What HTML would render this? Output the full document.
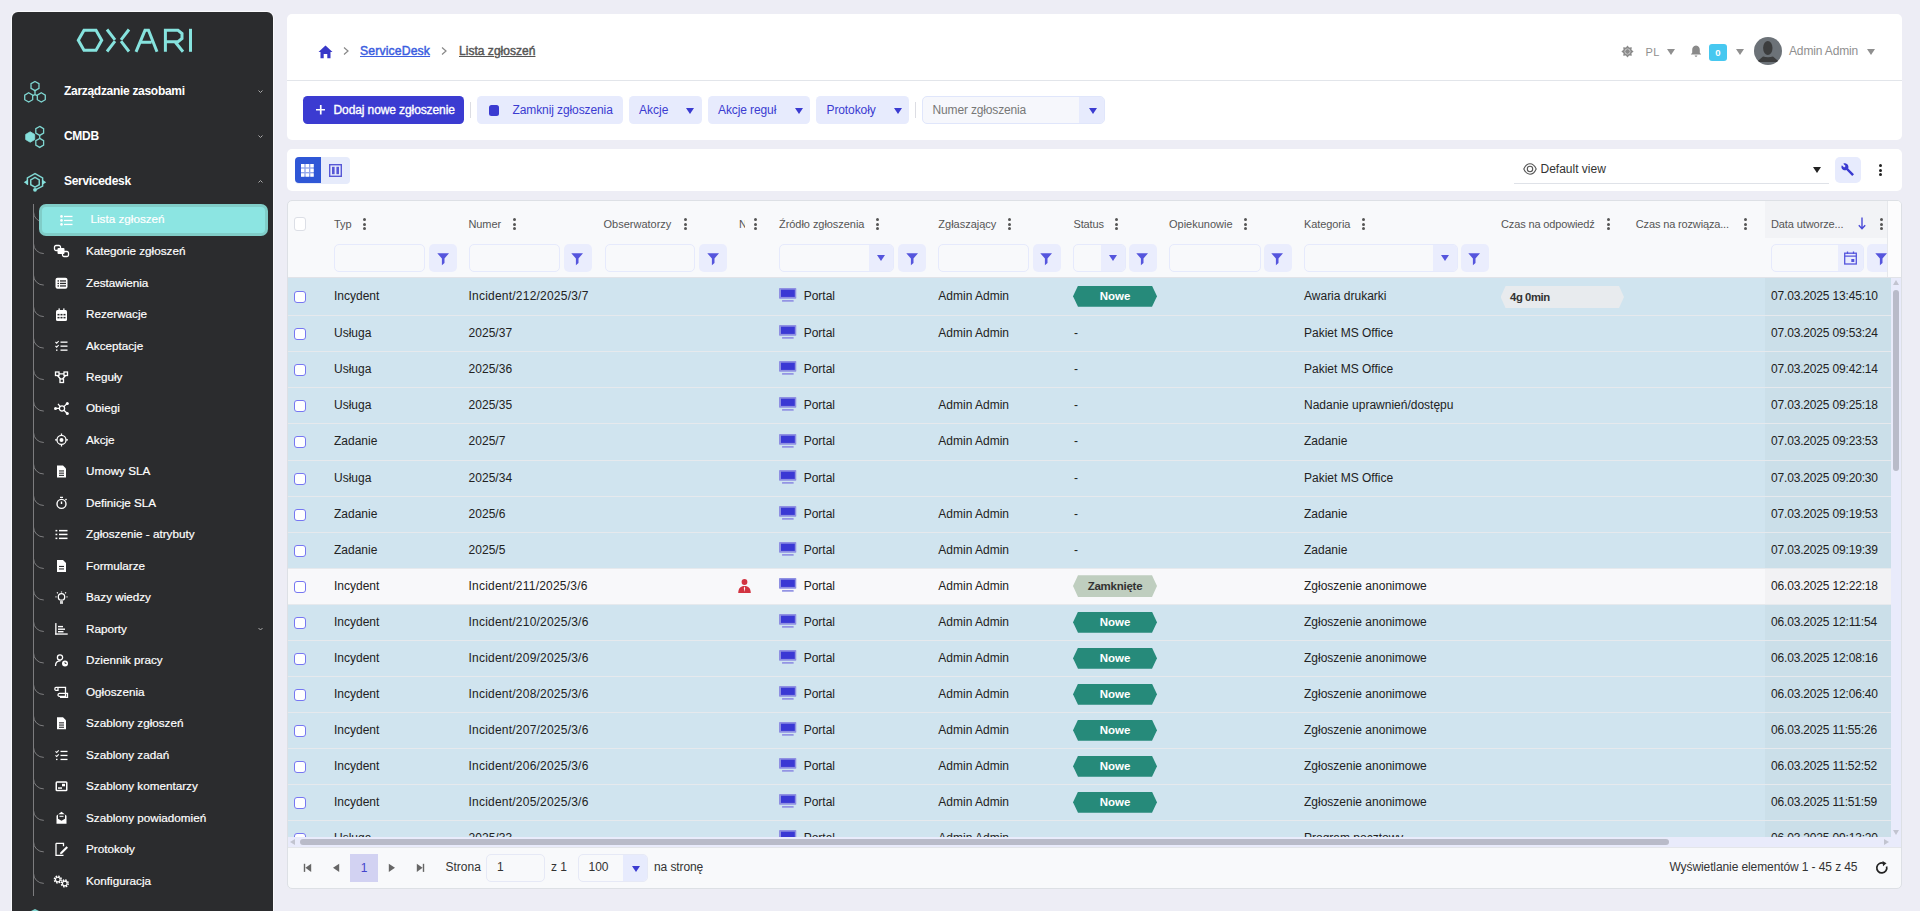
<!DOCTYPE html><html><head><meta charset="utf-8"><style>
*{box-sizing:border-box;margin:0;padding:0}
html,body{width:1920px;height:911px;overflow:hidden}
body{background:#ededf5;font-family:"Liberation Sans",sans-serif;position:relative;color:#222}
.a{position:absolute;white-space:nowrap}
#sb{position:absolute;left:12px;top:12px;width:261px;height:930px;background:#2b2c2e;border-radius:6px;box-shadow:0 0 0 1px #f9f9fc}
.mi{position:absolute;left:64px;color:#fff;font-size:12px;font-weight:700;letter-spacing:-0.3px;white-space:nowrap;line-height:14px}
.si{position:absolute;left:86px;color:#fff;font-size:11.7px;white-space:nowrap;line-height:14px;-webkit-text-stroke:0.2px #fff;letter-spacing:0px}
.card{position:absolute;left:287px;width:1615px;background:#fff;border-radius:5px}
.btn{position:absolute;top:96px;height:28px;border-radius:4.5px;background:#e7ebfd;color:#3b3bd1;font-size:12px;line-height:28px;white-space:nowrap}
.tri{position:absolute;width:0;height:0;border-left:4px solid transparent;border-right:4px solid transparent;border-top:6px solid #3b3bd1}
.hl{position:absolute;top:216.8px;font-size:11px;color:#555;white-space:nowrap;line-height:14px}
.dots{position:absolute;top:218px;width:3px;height:12px}
.dots i{display:block;width:3px;height:3px;background:#555;border-radius:50%;margin-bottom:1.5px}
.fin{position:absolute;top:244px;height:28px;border:1px solid #e6eafc;border-radius:5px;background:#f8f9fb;overflow:hidden}
.fdd{position:absolute;top:0;right:0;width:24px;height:26px;background:#eaedfd}
.fbt{position:absolute;top:244px;width:28px;height:28px;border-radius:5px;background:#eaedfd}
.row{position:absolute;left:0;width:1603px;border-bottom:1px solid #e6e9ed;background:#d0e4ef}
.c{position:absolute;font-size:12px;line-height:14px;white-space:nowrap;color:#222}
.cb{position:absolute;left:6px;width:12px;height:12px;border:1.5px solid #7777f2;border-radius:3px;background:#fff}
.badge{position:absolute;left:785px;width:84px;height:21px;font-size:11.5px;font-weight:700;line-height:21px;text-align:center;color:#fff;clip-path:polygon(5px 0,calc(100% - 5px) 0,100% 50%,calc(100% - 5px) 100%,5px 100%,0 50%)}
</style></head><body>
<div id="sb"></div>
<svg class="a" style="left:70px;top:20px" width="130" height="40" viewBox="0 0 130 40" fill="none" stroke="#86e3de" stroke-width="3">
<path d="M8.3 20.3 L14 10.3 L26 10.3 L31.7 20.3 L26 30.3 L14 30.3 Z" stroke-linejoin="miter"/>
<path d="M37 9.5 L45 19.8 M45 21.2 L37 31.5"/>
<path d="M59 9.5 L51 19.8 M51 21.2 L59 31.5"/>
<path d="M66 31.8 L75 10.3 L78.5 10.3 L87 31.8 M71 22.2 H81.5"/>
<path d="M95.4 8.8 V31.8 M95.4 10.3 H108 L112 13.5 V18.5 L108 21.7 H95.4 M105 21.7 L113 31.8"/>
<path d="M120.5 8.8 V31.8"/>
</svg>
<svg class="a" style="left:0;top:0" width="60" height="200" viewBox="0 0 60 200" fill="none" stroke="#7fd6d1" stroke-width="1.3"><path d="M35.00 81.45 L38.98 83.75 L38.98 88.35 L35.00 90.65 L31.02 88.35 L31.02 83.75 Z"/><path d="M28.70 92.80 L32.68 95.10 L32.68 99.70 L28.70 102.00 L24.72 99.70 L24.72 95.10 Z"/><path d="M41.30 92.80 L45.28 95.10 L45.28 99.70 L41.30 102.00 L37.32 99.70 L37.32 95.10 Z"/><path d="M35 90.6 V94.6 L32.7 95.6 M35 94.6 L37.3 95.6"/><path d="M30.20 131.80 L34.70 134.40 L34.70 139.60 L30.20 142.20 L25.70 139.60 L25.70 134.40 Z" fill="#86e0dc" stroke="#86e0dc" stroke-width="0.8"/><path d="M39.70 126.40 L43.60 128.65 L43.60 133.15 L39.70 135.40 L35.80 133.15 L35.80 128.65 Z"/><path d="M39.70 138.40 L43.60 140.65 L43.60 145.15 L39.70 147.40 L35.80 145.15 L35.80 140.65 Z"/><path d="M39.7 135.4 V138.4"/><g transform="translate(35 182.3)"><path d="M-7.6 2.4 V-4.4 L0 -8.7 L7.6 -4.4 V3.8 L0.8 7.4" stroke-width="1.5"/><path d="M0.00 -4.90 L4.24 -2.45 L4.24 2.45 L0.00 4.90 L-4.24 2.45 L-4.24 -2.45 Z" stroke-width="1.5"/><path d="M-11.2 0 L-7 -2.8 L-7 2.6 Z M11.2 0 L7 -2.8 L7 2.6 Z" fill="#86e0dc" stroke="none"/><circle cx="0" cy="7.5" r="1.9" fill="#86e0dc" stroke="none"/></g></svg>
<div class="mi" style="top:84px">Zarządzanie zasobami</div>
<div class="mi" style="top:129px">CMDB</div>
<div class="mi" style="top:174px">Servicedesk</div>
<svg class="a" style="left:255px;top:85px" width="12" height="100" viewBox="0 0 12 100" fill="none" stroke="#aaa" stroke-width="1">
<path d="M3.5 5.5 l2 2 l2 -2"/><path d="M3.5 50.5 l2 2 l2 -2"/><path d="M3.5 97.5 l2 -2 l2 2"/>
</svg>
<svg class="a" style="left:0;top:0" width="280" height="911" viewBox="0 0 280 911" fill="none" stroke="#7c7c7e" stroke-width="1"><path d="M33.5 204 V896"/><path d="M33.5 212.0 A10.3 10 0 0 0 43.8 222.0"/><path d="M33.5 243.6 A10.3 10 0 0 0 43.8 253.6"/><path d="M33.5 275.1 A10.3 10 0 0 0 43.8 285.1"/><path d="M33.5 306.6 A10.3 10 0 0 0 43.8 316.6"/><path d="M33.5 338.1 A10.3 10 0 0 0 43.8 348.1"/><path d="M33.5 369.6 A10.3 10 0 0 0 43.8 379.6"/><path d="M33.5 401.1 A10.3 10 0 0 0 43.8 411.1"/><path d="M33.5 432.5 A10.3 10 0 0 0 43.8 442.5"/><path d="M33.5 464.0 A10.3 10 0 0 0 43.8 474.0"/><path d="M33.5 495.5 A10.3 10 0 0 0 43.8 505.5"/><path d="M33.5 527.0 A10.3 10 0 0 0 43.8 537.0"/><path d="M33.5 558.5 A10.3 10 0 0 0 43.8 568.5"/><path d="M33.5 590.0 A10.3 10 0 0 0 43.8 600.0"/><path d="M33.5 621.5 A10.3 10 0 0 0 43.8 631.5"/><path d="M33.5 653.0 A10.3 10 0 0 0 43.8 663.0"/><path d="M33.5 684.5 A10.3 10 0 0 0 43.8 694.5"/><path d="M33.5 715.9 A10.3 10 0 0 0 43.8 725.9"/><path d="M33.5 747.4 A10.3 10 0 0 0 43.8 757.4"/><path d="M33.5 778.9 A10.3 10 0 0 0 43.8 788.9"/><path d="M33.5 810.4 A10.3 10 0 0 0 43.8 820.4"/><path d="M33.5 841.9 A10.3 10 0 0 0 43.8 851.9"/><path d="M33.5 873.4 A10.3 10 0 0 0 43.8 883.4"/></svg>
<div class="a" style="left:39px;top:204px;width:229px;height:32px;background:#8ce5e2;border:3px solid #80cdc8;border-radius:7px"></div>
<div class="si" style="left:90.5px;top:212.4px">Lista zgłoszeń</div>
<div class="si" style="left:86px;top:244.0px">Kategorie zgłoszeń</div>
<div class="si" style="left:86px;top:275.5px">Zestawienia</div>
<div class="si" style="left:86px;top:307.0px">Rezerwacje</div>
<div class="si" style="left:86px;top:338.5px">Akceptacje</div>
<div class="si" style="left:86px;top:370.0px">Reguły</div>
<div class="si" style="left:86px;top:401.4px">Obiegi</div>
<div class="si" style="left:86px;top:432.9px">Akcje</div>
<div class="si" style="left:86px;top:464.4px">Umowy SLA</div>
<div class="si" style="left:86px;top:495.9px">Definicje SLA</div>
<div class="si" style="left:86px;top:527.4px">Zgłoszenie - atrybuty</div>
<div class="si" style="left:86px;top:558.9px">Formularze</div>
<div class="si" style="left:86px;top:590.4px">Bazy wiedzy</div>
<div class="si" style="left:86px;top:621.9px">Raporty</div>
<div class="si" style="left:86px;top:653.4px">Dziennik pracy</div>
<div class="si" style="left:86px;top:684.9px">Ogłoszenia</div>
<div class="si" style="left:86px;top:716.3px">Szablony zgłoszeń</div>
<div class="si" style="left:86px;top:747.8px">Szablony zadań</div>
<div class="si" style="left:86px;top:779.3px">Szablony komentarzy</div>
<div class="si" style="left:86px;top:810.8px">Szablony powiadomień</div>
<div class="si" style="left:86px;top:842.3px">Protokoły</div>
<div class="si" style="left:86px;top:873.8px">Konfiguracja</div>
<svg class="a" style="left:255px;top:625px" width="12" height="10" fill="none" stroke="#aaa" stroke-width="1"><path d="M3.5 3 l2 2 l2 -2"/></svg>
<svg class="a" style="left:0;top:0" width="280" height="911" viewBox="0 0 280 911" fill="#fff" stroke="none"><g transform="translate(66.5 220.4)" fill="#fff"><circle cx="-5" cy="-4" r="1.3"/><circle cx="-5" cy="0" r="1.3"/><circle cx="-5" cy="4" r="1.3"/><rect x="-2.5" y="-4.6" width="8.5" height="1.3"/><rect x="-2.5" y="-0.6" width="8.5" height="1.3"/><rect x="-2.5" y="3.4" width="8.5" height="1.3"/></g><g transform="translate(61.5 251.0)"><rect x="-7" y="-5.5" width="6" height="5" rx="1.5" fill="none" stroke="#fff" stroke-width="1.3"/><rect x="1" y="0.5" width="6" height="5" rx="1.5" fill="none" stroke="#fff" stroke-width="1.3"/><rect x="-4" y="-3" width="7" height="6" rx="1"/></g><g transform="translate(61.5 282.5)"><g transform="translate(0 0.8)"><rect x="-6" y="-5.5" width="12" height="11" rx="2"/><rect x="-4" y="-3" width="1.5" height="1.3" fill="#2b2c2e"/><rect x="-1.5" y="-3" width="6" height="1.3" fill="#2b2c2e"/><rect x="-4" y="-0.5" width="1.5" height="1.3" fill="#2b2c2e"/><rect x="-1.5" y="-0.5" width="6" height="1.3" fill="#2b2c2e"/><rect x="-4" y="2" width="1.5" height="1.3" fill="#2b2c2e"/><rect x="-1.5" y="2" width="6" height="1.3" fill="#2b2c2e"/></g></g><g transform="translate(61.5 314.0)"><g transform="translate(0 0.9)"><rect x="-5.5" y="-5" width="11" height="11" rx="1.5"/><rect x="-3" y="-6.5" width="1.3" height="3"/><rect x="1.7" y="-6.5" width="1.3" height="3"/><g fill="#2b2c2e"><rect x="-4" y="-1" width="2" height="1.5"/><rect x="-1" y="-1" width="2" height="1.5"/><rect x="2" y="-1" width="2" height="1.5"/><rect x="-4" y="2" width="2" height="1.5"/><rect x="-1" y="2" width="2" height="1.5"/><rect x="2" y="2" width="2" height="1.5"/></g></g></g><g transform="translate(61.5 345.5)"><path d="M-6 -3.5 l1.2 1.2 l2 -2.2" stroke="#fff" stroke-width="1.1" fill="none"/><path d="M-6 0.5 l1.2 1.2 l2 -2.2" stroke="#fff" stroke-width="1.1" fill="none"/><rect x="-1" y="-4" width="7" height="1.3"/><rect x="-1" y="0" width="7" height="1.3"/><rect x="-5.5" y="4" width="1.5" height="1.3"/><rect x="-1" y="4" width="7" height="1.3"/></g><g transform="translate(61.5 377.0)"><g fill="none" stroke="#fff" stroke-width="1.3"><rect x="-6" y="-5" width="3.5" height="3.5"/><rect x="2.5" y="-5" width="3.5" height="3.5"/><rect x="-1.5" y="2" width="3.5" height="3.5"/><path d="M-2.5 -3.2 H2.5 M-4 -1.5 L-1 2 M4 -1.5 L1 2"/></g></g><g transform="translate(61.5 408.4)"><g fill="none" stroke="#fff" stroke-width="1.3"><circle cx="0.5" cy="0" r="2.6"/><path d="M-2.1 0 H-5.5 M2.4 -1.8 L5.5 -4.8 M2.4 1.8 L5.5 4.8 M-1.3 -1.8 L-3.5 -4.5"/></g><circle cx="-6" cy="0" r="1.5"/><circle cx="5.8" cy="-5" r="1.5"/><circle cx="5.8" cy="5" r="1.5"/></g><g transform="translate(61.5 439.9)"><g fill="none" stroke="#fff" stroke-width="1.3"><circle cx="0" cy="0" r="4.5"/><path d="M0 -6.5 V-4.5 M0 4.5 V6.5 M-6.5 0 H-4.5 M4.5 0 H6.5"/></g><circle cx="0" cy="0" r="2"/></g><g transform="translate(61.5 471.4)"><path d="M-4.5 -6 H1.5 L4.5 -3 V6 H-4.5 Z"/><g fill="#2b2c2e"><rect x="-2.5" y="-1" width="5" height="1.1"/><rect x="-2.5" y="1.2" width="5" height="1.1"/><rect x="-2.5" y="3.4" width="5" height="1.1"/></g></g><g transform="translate(61.5 723.3)"><path d="M-4.5 -6 H1.5 L4.5 -3 V6 H-4.5 Z"/><g fill="#2b2c2e"><rect x="-2.5" y="-1" width="5" height="1.1"/><rect x="-2.5" y="1.2" width="5" height="1.1"/><rect x="-2.5" y="3.4" width="5" height="1.1"/></g></g><g transform="translate(61.5 502.9)"><g fill="none" stroke="#fff" stroke-width="1.4"><circle cx="0" cy="1" r="4.5"/><path d="M0 1 V-1.5 M-1.5 -5.5 H1.5 M4 -3 l1 -1"/></g></g><g transform="translate(61.5 534.4)"><rect x="-6" y="-4.5" width="1.8" height="1.5"/><rect x="-6" y="-0.7" width="1.8" height="1.5"/><rect x="-6" y="3.2" width="1.8" height="1.5"/><rect x="-2.5" y="-4.5" width="8.5" height="1.5"/><rect x="-2.5" y="-0.7" width="8.5" height="1.5"/><rect x="-2.5" y="3.2" width="8.5" height="1.5"/></g><g transform="translate(61.5 565.9)"><path d="M-4.5 -6 H1.5 L4.5 -3 V6 H-4.5 Z"/><g fill="#2b2c2e"><rect x="-2.5" y="0" width="5" height="1.1"/><rect x="-2.5" y="2.5" width="5" height="1.1"/></g></g><g transform="translate(61.5 597.4)"><g fill="none" stroke="#fff" stroke-width="1.3"><circle cx="0" cy="-0.5" r="3.2"/><path d="M-1.5 4.5 H1.5 M0 -6 V-5 M-5 -0.5 H-6 M5 -0.5 H6 M-3.7 -4.2 l-0.8 -0.8 M3.7 -4.2 l0.8 -0.8"/></g><rect x="-1.5" y="5" width="3" height="1.3"/></g><g transform="translate(61.5 628.9)"><rect x="-6.3" y="-5.8" width="1.3" height="11.5"/><rect x="-6.3" y="4.5" width="12.5" height="1.3"/><rect x="-3.5" y="-3" width="5" height="1.4"/><rect x="-3.5" y="-0.4" width="7" height="1.4"/><rect x="-3.5" y="2.1" width="5.5" height="1.4"/></g><g transform="translate(61.5 660.4)"><g fill="none" stroke="#fff" stroke-width="1.3"><circle cx="-1.5" cy="-3" r="2.6"/><path d="M-6 5.5 C-6 1 -3.5 0.5 -1 0.5"/></g><circle cx="3.5" cy="3" r="3"/><path d="M3.5 1.5 V3 H5" stroke="#2b2c2e" stroke-width="0.9" fill="none"/></g><g transform="translate(61.5 691.9)"><g fill="none" stroke="#fff" stroke-width="1.3"><path d="M-5.5 -4.5 H4 V4.5 H-2 C-4 4.5 -4 1.5 -2 1.5 H6 V5.5 H-1.5 M-5.5 -4.5 C-7 -4.5 -7 -1.5 -5.5 -1.5 H-3.5 V-4.5"/></g></g><g transform="translate(61.5 754.8)"><path d="M-6 -3.5 l1.2 1.2 l2 -2.2" stroke="#fff" stroke-width="1.1" fill="none"/><path d="M-6 0.5 l1.2 1.2 l2 -2.2" stroke="#fff" stroke-width="1.1" fill="none"/><rect x="-1" y="-4" width="7" height="1.3"/><rect x="-1" y="0" width="7" height="1.3"/><rect x="-5.5" y="4" width="1.5" height="1.3"/><rect x="-1" y="4" width="7" height="1.3"/></g><g transform="translate(61.5 786.3)"><rect x="-6" y="-5" width="12" height="10" rx="1.5"/><rect x="-4.5" y="-3.5" width="9" height="7" fill="#2b2c2e"/><rect x="0.5" y="-2.5" width="3" height="2.5"/><rect x="-3.5" y="1" width="4" height="1.5"/></g><g transform="translate(61.5 817.8)"><path d="M-5 -2 L0 -6 L5 -2 V6 H-5 Z"/><path d="M-3.5 -3.5 H3.5 V1 L0 3 L-3.5 1 Z" fill="#2b2c2e"/><rect x="-2" y="-2" width="4" height="1" fill="#fff"/></g><g transform="translate(61.5 849.3)"><g fill="none" stroke="#fff" stroke-width="1.3"><path d="M-5.5 -6 H2 V-3 M-5.5 -6 V6 H2"/></g><path d="M-1 3 L5 -3 L6.5 -1.5 L0.5 4.5 L-1.5 5 Z"/></g><g transform="translate(61.5 880.8)"><g fill="none" stroke="#fff"><circle cx="-3.7" cy="-1.3" r="2.3" stroke-width="1.1"/><circle cx="-3.7" cy="-1.3" r="3.4" stroke-width="1.5" stroke-dasharray="1.6 1.07"/><circle cx="3.3" cy="2.6" r="2.3" stroke-width="1.1"/><circle cx="3.3" cy="2.6" r="3.4" stroke-width="1.5" stroke-dasharray="1.6 1.07"/></g></g></svg>
<div class="a" style="left:31px;top:909px;width:8px;height:8px;background:#7fd6d1;clip-path:polygon(50% 0,100% 25%,100% 100%,0 100%,0 25%)"></div>
<div class="card" style="top:14px;height:125.5px"></div>
<div class="a" style="left:287px;top:80px;width:1615px;height:1px;background:#e2e5ea"></div>
<svg class="a" style="left:318px;top:45px" width="15" height="14" viewBox="0 0 15 14"><path d="M7.5 0.5 L14.5 7 H12.5 V13.2 H9.3 V9 H5.7 V13.2 H2.5 V7 H0.5 Z" fill="#3838c8"/></svg>
<svg class="a" style="left:342px;top:46px" width="8" height="10" fill="none" stroke="#888" stroke-width="1.2"><path d="M2 1.5 L6 5 L2 8.5"/></svg>
<div class="a" style="left:360px;top:44px;font-size:12px;line-height:14px;color:#3b5de0;text-decoration:underline;-webkit-text-stroke:0.45px #3b5de0;letter-spacing:0.15px;font-size:12.2px">ServiceDesk</div>
<svg class="a" style="left:440px;top:46px" width="8" height="10" fill="none" stroke="#888" stroke-width="1.2"><path d="M2 1.5 L6 5 L2 8.5"/></svg>
<div class="a" style="left:459px;top:44px;font-size:12px;line-height:14px;color:#555;text-decoration:underline;-webkit-text-stroke:0.45px #555;letter-spacing:0.03px">Lista zgłoszeń</div>
<svg class="a" style="left:1621.4px;top:45px" width="13" height="13" viewBox="-6.5 -6.5 13 13"><polygon points="0.00,-6.10 1.65,-3.97 4.31,-4.31 3.97,-1.65 6.10,0.00 3.97,1.65 4.31,4.31 1.65,3.97 0.00,6.10 -1.65,3.97 -4.31,4.31 -3.97,1.65 -6.10,0.00 -3.97,-1.65 -4.31,-4.31 -1.65,-3.97" fill="#8a8a8a"/><circle r="3.3" fill="#8a8a8a"/><circle r="2.6" fill="none" stroke="#e8e8e8" stroke-width="0.7"/><circle r="1.9" fill="#8a8a8a"/></svg>
<div class="a" style="left:1645.5px;top:45px;font-size:11px;line-height:14px;color:#8f8f8f;letter-spacing:0.4px">PL</div>
<div class="tri" style="left:1667px;top:49px;border-top-color:#8f8f8f;border-left-width:4px;border-right-width:4px;border-top-width:6px"></div>
<svg class="a" style="left:1690px;top:45px" width="12" height="12" viewBox="0 0 12 12"><path d="M6 0.5 C3.3 0.5 2.2 2.8 2.2 5 V7.8 L0.8 9.6 H11.2 L9.8 7.8 V5 C9.8 2.8 8.7 0.5 6 0.5 Z" fill="#8a8a8a"/><path d="M4.6 10.4 H7.4 C7.2 11.3 6.7 11.8 6 11.8 C5.3 11.8 4.8 11.3 4.6 10.4Z" fill="#8a8a8a"/></svg>
<div class="a" style="left:1709px;top:44px;width:18px;height:17px;background:#47c8f0;border-radius:3px;color:#fff;font-size:9.5px;font-weight:700;text-align:center;line-height:17px">0</div>
<div class="tri" style="left:1736px;top:49px;border-top-color:#8f8f8f"></div>
<svg class="a" style="left:1754px;top:37px" width="28" height="28" viewBox="0 0 28 28"><defs><clipPath id="av"><circle cx="14" cy="14" r="14"/></clipPath></defs><circle cx="14" cy="14" r="14" fill="#6c7278"/><g clip-path="url(#av)" fill="#3c3d3e"><ellipse cx="13.8" cy="11" rx="4.7" ry="6.9"/><path d="M2.6 25 L9 19.6 Q14 21 19 19.6 L25.4 25 Z"/></g></svg>
<div class="a" style="left:1789px;top:44px;font-size:12px;line-height:14px;color:#8f8f8f;letter-spacing:-0.15px">Admin Admin</div>
<div class="tri" style="left:1867px;top:49px;border-top-color:#8f8f8f"></div>
<div class="btn" style="left:303px;width:161px;background:#3b3bd1;color:#fff"><svg class="a" style="left:12.6px;top:9.4px" width="9.5" height="9.5"><path d="M4.75 0 V9.5 M0 4.75 H9.5" stroke="#fff" stroke-width="1.7"/></svg><span class="a" style="left:30.5px;-webkit-text-stroke:0.35px #fff;letter-spacing:-0.1px">Dodaj nowe zgłoszenie</span></div>
<div class="a" style="left:470px;top:102px;width:1px;height:16px;background:#dcdde3"></div>
<div class="btn" style="left:477px;width:146px"><div class="a" style="left:11.5px;top:9px;width:10.5px;height:10.5px;background:#3b3bd1;border-radius:2.5px"></div><span class="a" style="left:35.5px;letter-spacing:-0.1px">Zamknij zgłoszenia</span></div>
<div class="btn" style="left:629px;width:73px"><span class="a" style="left:10px">Akcje</span><div class="tri" style="left:57px;top:11.5px"></div></div>
<div class="btn" style="left:708px;width:101.5px"><span class="a" style="left:10px;letter-spacing:-0.1px">Akcje reguł</span><div class="tri" style="left:86.5px;top:11.5px"></div></div>
<div class="btn" style="left:816px;width:93px"><span class="a" style="left:10.5px;letter-spacing:-0.1px">Protokoły</span><div class="tri" style="left:77.5px;top:11.5px"></div></div>
<div class="a" style="left:915px;top:102px;width:1px;height:16px;background:#dcdde3"></div>
<div class="a" style="left:922px;top:96px;width:183px;height:28px;border:1px solid #e0e6fb;border-radius:5px;background:#f6f7fc;overflow:hidden"><span class="a" style="left:9.5px;top:5.5px;font-size:12px;line-height:14px;color:#777;letter-spacing:-0.15px">Numer zgłoszenia</span><div class="a" style="left:156px;top:0;width:26px;height:26px;background:#e7ebfd"></div><div class="tri" style="left:166px;top:10.5px"></div></div>
<div class="card" style="top:149px;height:42px"></div>
<div class="a" style="left:295px;top:157px;width:55px;height:27px;background:#e6ebfb;border-radius:4px"></div>
<div class="a" style="left:295px;top:157px;width:26px;height:26px;background:#2f57d6;border-radius:4px 0 0 4px"></div>
<svg class="a" style="left:301.2px;top:164px" width="12.7" height="12.7" viewBox="0 0 13 13" fill="#fff"><rect x="0" y="0" width="13" height="13" fill="#93a8ec"/><rect x="0" y="0" width="3.4" height="3.4"/><rect x="4.8" y="0" width="3.4" height="3.4"/><rect x="9.6" y="0" width="3.4" height="3.4"/><rect x="0" y="4.8" width="3.4" height="3.4"/><rect x="4.8" y="4.8" width="3.4" height="3.4"/><rect x="9.6" y="4.8" width="3.4" height="3.4"/><rect x="0" y="9.6" width="3.4" height="3.4"/><rect x="4.8" y="9.6" width="3.4" height="3.4"/><rect x="9.6" y="9.6" width="3.4" height="3.4"/></svg>
<svg class="a" style="left:329px;top:163.5px" width="13" height="13" viewBox="0 0 13 13"><rect x="0.7" y="0.7" width="11.6" height="11.6" fill="none" stroke="#5757d6" stroke-width="1.4"/><rect x="3" y="2.8" width="2.6" height="7.4" fill="#5757d6"/><rect x="7.4" y="2.8" width="2.6" height="7.4" fill="#5757d6"/></svg>
<div class="a" style="left:1514px;top:183px;width:315px;height:1px;background:#dfe2e8"></div>
<svg class="a" style="left:1522.5px;top:163px" width="14" height="12" viewBox="0 0 14 12" fill="none" stroke="#555" stroke-width="1.1"><path d="M0.8 6 C2.5 2.2 4.8 0.8 7 0.8 C9.2 0.8 11.5 2.2 13.2 6 C11.5 9.8 9.2 11.2 7 11.2 C4.8 11.2 2.5 9.8 0.8 6 Z"/><circle cx="7" cy="6" r="2.7"/></svg>
<div class="a" style="left:1540.5px;top:162px;font-size:12px;line-height:14px;color:#333">Default view</div>
<div class="tri" style="left:1813px;top:166.5px;border-top-color:#222;border-left-width:4px;border-right-width:4px;border-top-width:6px"></div>
<div class="a" style="left:1835px;top:157px;width:26px;height:26px;background:#e7ebfd;border-radius:5px"></div>
<svg class="a" style="left:1841px;top:163px" width="14" height="14" viewBox="0 0 14 14"><path d="M13 11.2 L7.2 5.4 C7.8 3.6 7.3 1.8 5.9 0.9 C4.8 0.2 3.4 0.2 2.3 0.8 L4.6 3.1 L3.2 4.5 L0.9 2.2 C0.2 3.4 0.3 4.9 1.1 5.9 C2.1 7.2 3.8 7.6 5.4 7.1 L11.2 13 Z" fill="#3a3ad0"/></svg>
<div class="a" style="left:1878.5px;top:164px;width:3px;height:12px"><div style="width:3px;height:3px;background:#222;border-radius:50%;margin-bottom:1.6px"></div><div style="width:3px;height:3px;background:#222;border-radius:50%;margin-bottom:1.6px"></div><div style="width:3px;height:3px;background:#222;border-radius:50%"></div></div>
<div class="a" style="left:287px;top:200px;width:1615px;height:689px;background:#f8f9fb;border:1px solid #dde0e5;border-radius:5px"></div>
<div class="a" style="left:1765px;top:201px;width:122px;height:37px;background:#f2f3f6"></div>
<div class="a" style="left:1887px;top:201px;width:1px;height:77px;background:#e6e8ec"></div>
<div class="a" style="left:1888px;top:201px;width:13px;height:77px;background:#fcfcfd;border-radius:0 4px 0 0"></div>
<div class="a" style="left:294px;top:217px;width:12px;height:13.5px;border:1px solid #dcdfe6;border-radius:3px;background:#fff"></div>
<div class="hl" style="left:334px;letter-spacing:-0.1px">Typ</div>
<div class="dots" style="left:363.3px"><i></i><i></i><i></i></div>
<div class="hl" style="left:468.4px;letter-spacing:-0.05px">Numer</div>
<div class="dots" style="left:513.0px"><i></i><i></i><i></i></div>
<div class="hl" style="left:603.5px;letter-spacing:0px">Obserwatorzy</div>
<div class="dots" style="left:684.1px"><i></i><i></i><i></i></div>
<div class="hl" style="left:739px;width:6px;overflow:hidden">N</div>
<div class="dots" style="left:754.1px"><i></i><i></i><i></i></div>
<div class="hl" style="left:779px;letter-spacing:-0.05px">Źródło zgłoszenia</div>
<div class="dots" style="left:875.9px"><i></i><i></i><i></i></div>
<div class="hl" style="left:938.3px;letter-spacing:0px">Zgłaszający</div>
<div class="dots" style="left:1008.1px"><i></i><i></i><i></i></div>
<div class="hl" style="left:1073.4px;letter-spacing:-0.1px">Status</div>
<div class="dots" style="left:1115.0px"><i></i><i></i><i></i></div>
<div class="hl" style="left:1169px;letter-spacing:0px">Opiekunowie</div>
<div class="dots" style="left:1244.1px"><i></i><i></i><i></i></div>
<div class="hl" style="left:1304.1px;letter-spacing:-0.1px">Kategoria</div>
<div class="dots" style="left:1362.0px"><i></i><i></i><i></i></div>
<div class="hl" style="left:1501px;letter-spacing:-0.14px">Czas na odpowiedź</div>
<div class="dots" style="left:1607.3px"><i></i><i></i><i></i></div>
<div class="hl" style="left:1635.8px;letter-spacing:-0.15px">Czas na rozwiąza...</div>
<div class="dots" style="left:1744.3px"><i></i><i></i><i></i></div>
<div class="hl" style="left:1771px;letter-spacing:-0.1px">Data utworze...</div>
<div class="dots" style="left:1879.9px"><i></i><i></i><i></i></div>
<svg class="a" style="left:1857.5px;top:217px" width="8" height="13" viewBox="0 0 8 13" fill="none" stroke="#4a4ad8" stroke-width="1.4"><path d="M4 0.5 V11.5 M0.8 8.3 L4 11.8 L7.2 8.3"/></svg>
<div class="fin" style="left:334px;width:91.3px"></div>
<div class="fbt" style="left:429.3px"><svg class="a" style="left:7.4px;top:8.8px" width="13" height="13" viewBox="0 0 13 13"><path d="M0.3 0.2 H12 L7.5 5.6 V10.1 L4.9 12.2 V5.6 Z" fill="#5555dd"/></svg></div>
<div class="fin" style="left:469.1px;width:91.4px"></div>
<div class="fbt" style="left:564px"><svg class="a" style="left:7.4px;top:8.8px" width="13" height="13" viewBox="0 0 13 13"><path d="M0.3 0.2 H12 L7.5 5.6 V10.1 L4.9 12.2 V5.6 Z" fill="#5555dd"/></svg></div>
<div class="fin" style="left:604.6px;width:90.6px"></div>
<div class="fbt" style="left:699.2px"><svg class="a" style="left:7.4px;top:8.8px" width="13" height="13" viewBox="0 0 13 13"><path d="M0.3 0.2 H12 L7.5 5.6 V10.1 L4.9 12.2 V5.6 Z" fill="#5555dd"/></svg></div>
<div class="fin" style="left:779px;width:115.0px"><div class="fdd"><div class="tri" style="left:8px;top:9.9px;border-left-width:4px;border-right-width:4px;border-top-width:6px;border-top-color:#5555dd"></div></div></div>
<div class="fbt" style="left:898.3px"><svg class="a" style="left:7.4px;top:8.8px" width="13" height="13" viewBox="0 0 13 13"><path d="M0.3 0.2 H12 L7.5 5.6 V10.1 L4.9 12.2 V5.6 Z" fill="#5555dd"/></svg></div>
<div class="fin" style="left:938.3px;width:91.2px"></div>
<div class="fbt" style="left:1033px"><svg class="a" style="left:7.4px;top:8.8px" width="13" height="13" viewBox="0 0 13 13"><path d="M0.3 0.2 H12 L7.5 5.6 V10.1 L4.9 12.2 V5.6 Z" fill="#5555dd"/></svg></div>
<div class="fin" style="left:1073.4px;width:52.6px"><div class="fdd"><div class="tri" style="left:8px;top:9.9px;border-left-width:4px;border-right-width:4px;border-top-width:6px;border-top-color:#5555dd"></div></div></div>
<div class="fbt" style="left:1129px"><svg class="a" style="left:7.4px;top:8.8px" width="13" height="13" viewBox="0 0 13 13"><path d="M0.3 0.2 H12 L7.5 5.6 V10.1 L4.9 12.2 V5.6 Z" fill="#5555dd"/></svg></div>
<div class="fin" style="left:1169px;width:91.5px"></div>
<div class="fbt" style="left:1264px"><svg class="a" style="left:7.4px;top:8.8px" width="13" height="13" viewBox="0 0 13 13"><path d="M0.3 0.2 H12 L7.5 5.6 V10.1 L4.9 12.2 V5.6 Z" fill="#5555dd"/></svg></div>
<div class="fin" style="left:1304px;width:153.6px"><div class="fdd"><div class="tri" style="left:8px;top:9.9px;border-left-width:4px;border-right-width:4px;border-top-width:6px;border-top-color:#5555dd"></div></div></div>
<div class="fbt" style="left:1460.9px"><svg class="a" style="left:7.4px;top:8.8px" width="13" height="13" viewBox="0 0 13 13"><path d="M0.3 0.2 H12 L7.5 5.6 V10.1 L4.9 12.2 V5.6 Z" fill="#5555dd"/></svg></div>
<div class="fin" style="left:1771px;width:93.0px"><div class="fdd" style="width:25px"><svg class="a" style="left:5.5px;top:6px" width="13" height="14" viewBox="0 0 13 14" fill="none" stroke="#5555dd" stroke-width="1.3"><rect x="0.7" y="2.2" width="11.6" height="10.8"/><path d="M0.7 5.2 H12.3 M3.5 0.5 V3 M9.5 0.5 V3"/><rect x="7.3" y="8" width="3" height="3" fill="#5555dd" stroke="none"/></svg></div></div>
<div class="fbt" style="left:1867.3px;width:20.2px;border-radius:5px 0 0 5px;overflow:hidden"><svg class="a" style="left:7.4px;top:8.8px" width="13" height="13" viewBox="0 0 13 13"><path d="M0.3 0.2 H12 L7.5 5.6 V10.1 L4.9 12.2 V5.6 Z" fill="#5555dd"/></svg></div>
<div class="a" style="left:288px;top:277px;width:1613px;height:1px;background:#e1e3e8"></div>
<div class="a" style="left:288px;top:278px;width:1603px;height:559px;overflow:hidden">
<div class="row" style="top:0.00px;height:38.00px;background:#d0e4ef"><div class="a" style="left:1477px;top:0;width:126px;height:100%;background:#cbdfe9"></div><div class="cb" style="top:12.5px"></div><div class="c" style="left:46px;top:10.7px">Incydent</div><div class="c" style="left:180.5px;top:10.7px;letter-spacing:0.22px">Incident/212/2025/3/7</div><svg class="a" style="left:491px;top:10.1px" width="18" height="14" viewBox="0 0 18 14"><rect x="0" y="0" width="17.3" height="10.7" rx="0.8" fill="#8f90e2"/><rect x="2" y="1.7" width="13.8" height="7.2" fill="#3a38d4"/><rect x="3" y="12" width="11.7" height="1.7" rx="0.5" fill="#9394e4"/></svg><div class="c" style="left:515.7px;top:10.7px">Portal</div><div class="c" style="left:650.3px;top:10.7px">Admin Admin</div><div class="badge" style="top:7.8px;background:#268a7a;line-height:20.5px">Nowe</div><div class="c" style="left:1016px;top:10.7px">Awaria drukarki</div><div class="badge" style="left:1212.6px;width:123.4px;top:8.0px;height:22px;line-height:22px;background:#e8ebee;color:#333;text-align:left;padding-left:9.5px;letter-spacing:-0.45px;font-size:11.3px">4g 0min</div><div class="c" style="left:1483px;top:10.7px;letter-spacing:-0.17px">07.03.2025 13:45:10</div></div>
<div class="row" style="top:38.00px;height:36.00px;background:#d0e4ef"><div class="a" style="left:1477px;top:0;width:126px;height:100%;background:#cbdfe9"></div><div class="cb" style="top:11.5px"></div><div class="c" style="left:46px;top:9.7px">Usługa</div><div class="c" style="left:180.5px;top:9.7px;letter-spacing:0.04px">2025/37</div><svg class="a" style="left:491px;top:9.1px" width="18" height="14" viewBox="0 0 18 14"><rect x="0" y="0" width="17.3" height="10.7" rx="0.8" fill="#8f90e2"/><rect x="2" y="1.7" width="13.8" height="7.2" fill="#3a38d4"/><rect x="3" y="12" width="11.7" height="1.7" rx="0.5" fill="#9394e4"/></svg><div class="c" style="left:515.7px;top:9.7px">Portal</div><div class="c" style="left:650.3px;top:9.7px">Admin Admin</div><div class="c" style="left:786px;top:9.7px">-</div><div class="c" style="left:1016px;top:9.7px">Pakiet MS Office</div><div class="c" style="left:1483px;top:9.7px;letter-spacing:-0.17px">07.03.2025 09:53:24</div></div>
<div class="row" style="top:74.00px;height:36.00px;background:#d0e4ef"><div class="a" style="left:1477px;top:0;width:126px;height:100%;background:#cbdfe9"></div><div class="cb" style="top:11.5px"></div><div class="c" style="left:46px;top:9.7px">Usługa</div><div class="c" style="left:180.5px;top:9.7px;letter-spacing:0.04px">2025/36</div><svg class="a" style="left:491px;top:9.1px" width="18" height="14" viewBox="0 0 18 14"><rect x="0" y="0" width="17.3" height="10.7" rx="0.8" fill="#8f90e2"/><rect x="2" y="1.7" width="13.8" height="7.2" fill="#3a38d4"/><rect x="3" y="12" width="11.7" height="1.7" rx="0.5" fill="#9394e4"/></svg><div class="c" style="left:515.7px;top:9.7px">Portal</div><div class="c" style="left:786px;top:9.7px">-</div><div class="c" style="left:1016px;top:9.7px">Pakiet MS Office</div><div class="c" style="left:1483px;top:9.7px;letter-spacing:-0.17px">07.03.2025 09:42:14</div></div>
<div class="row" style="top:110.00px;height:36.00px;background:#d0e4ef"><div class="a" style="left:1477px;top:0;width:126px;height:100%;background:#cbdfe9"></div><div class="cb" style="top:11.5px"></div><div class="c" style="left:46px;top:9.7px">Usługa</div><div class="c" style="left:180.5px;top:9.7px;letter-spacing:0.04px">2025/35</div><svg class="a" style="left:491px;top:9.1px" width="18" height="14" viewBox="0 0 18 14"><rect x="0" y="0" width="17.3" height="10.7" rx="0.8" fill="#8f90e2"/><rect x="2" y="1.7" width="13.8" height="7.2" fill="#3a38d4"/><rect x="3" y="12" width="11.7" height="1.7" rx="0.5" fill="#9394e4"/></svg><div class="c" style="left:515.7px;top:9.7px">Portal</div><div class="c" style="left:650.3px;top:9.7px">Admin Admin</div><div class="c" style="left:786px;top:9.7px">-</div><div class="c" style="left:1016px;top:9.7px">Nadanie uprawnień/dostępu</div><div class="c" style="left:1483px;top:9.7px;letter-spacing:-0.17px">07.03.2025 09:25:18</div></div>
<div class="row" style="top:146.00px;height:37.00px;background:#d0e4ef"><div class="a" style="left:1477px;top:0;width:126px;height:100%;background:#cbdfe9"></div><div class="cb" style="top:12.0px"></div><div class="c" style="left:46px;top:10.2px">Zadanie</div><div class="c" style="left:180.5px;top:10.2px;letter-spacing:0.04px">2025/7</div><svg class="a" style="left:491px;top:9.6px" width="18" height="14" viewBox="0 0 18 14"><rect x="0" y="0" width="17.3" height="10.7" rx="0.8" fill="#8f90e2"/><rect x="2" y="1.7" width="13.8" height="7.2" fill="#3a38d4"/><rect x="3" y="12" width="11.7" height="1.7" rx="0.5" fill="#9394e4"/></svg><div class="c" style="left:515.7px;top:10.2px">Portal</div><div class="c" style="left:650.3px;top:10.2px">Admin Admin</div><div class="c" style="left:786px;top:10.2px">-</div><div class="c" style="left:1016px;top:10.2px">Zadanie</div><div class="c" style="left:1483px;top:10.2px;letter-spacing:-0.17px">07.03.2025 09:23:53</div></div>
<div class="row" style="top:183.00px;height:36.00px;background:#d0e4ef"><div class="a" style="left:1477px;top:0;width:126px;height:100%;background:#cbdfe9"></div><div class="cb" style="top:11.5px"></div><div class="c" style="left:46px;top:9.7px">Usługa</div><div class="c" style="left:180.5px;top:9.7px;letter-spacing:0.04px">2025/34</div><svg class="a" style="left:491px;top:9.1px" width="18" height="14" viewBox="0 0 18 14"><rect x="0" y="0" width="17.3" height="10.7" rx="0.8" fill="#8f90e2"/><rect x="2" y="1.7" width="13.8" height="7.2" fill="#3a38d4"/><rect x="3" y="12" width="11.7" height="1.7" rx="0.5" fill="#9394e4"/></svg><div class="c" style="left:515.7px;top:9.7px">Portal</div><div class="c" style="left:786px;top:9.7px">-</div><div class="c" style="left:1016px;top:9.7px">Pakiet MS Office</div><div class="c" style="left:1483px;top:9.7px;letter-spacing:-0.17px">07.03.2025 09:20:30</div></div>
<div class="row" style="top:219.00px;height:36.00px;background:#d0e4ef"><div class="a" style="left:1477px;top:0;width:126px;height:100%;background:#cbdfe9"></div><div class="cb" style="top:11.5px"></div><div class="c" style="left:46px;top:9.7px">Zadanie</div><div class="c" style="left:180.5px;top:9.7px;letter-spacing:0.04px">2025/6</div><svg class="a" style="left:491px;top:9.1px" width="18" height="14" viewBox="0 0 18 14"><rect x="0" y="0" width="17.3" height="10.7" rx="0.8" fill="#8f90e2"/><rect x="2" y="1.7" width="13.8" height="7.2" fill="#3a38d4"/><rect x="3" y="12" width="11.7" height="1.7" rx="0.5" fill="#9394e4"/></svg><div class="c" style="left:515.7px;top:9.7px">Portal</div><div class="c" style="left:650.3px;top:9.7px">Admin Admin</div><div class="c" style="left:786px;top:9.7px">-</div><div class="c" style="left:1016px;top:9.7px">Zadanie</div><div class="c" style="left:1483px;top:9.7px;letter-spacing:-0.17px">07.03.2025 09:19:53</div></div>
<div class="row" style="top:255.00px;height:36.00px;background:#d0e4ef"><div class="a" style="left:1477px;top:0;width:126px;height:100%;background:#cbdfe9"></div><div class="cb" style="top:11.5px"></div><div class="c" style="left:46px;top:9.7px">Zadanie</div><div class="c" style="left:180.5px;top:9.7px;letter-spacing:0.04px">2025/5</div><svg class="a" style="left:491px;top:9.1px" width="18" height="14" viewBox="0 0 18 14"><rect x="0" y="0" width="17.3" height="10.7" rx="0.8" fill="#8f90e2"/><rect x="2" y="1.7" width="13.8" height="7.2" fill="#3a38d4"/><rect x="3" y="12" width="11.7" height="1.7" rx="0.5" fill="#9394e4"/></svg><div class="c" style="left:515.7px;top:9.7px">Portal</div><div class="c" style="left:650.3px;top:9.7px">Admin Admin</div><div class="c" style="left:786px;top:9.7px">-</div><div class="c" style="left:1016px;top:9.7px">Zadanie</div><div class="c" style="left:1483px;top:9.7px;letter-spacing:-0.17px">07.03.2025 09:19:39</div></div>
<div class="row" style="top:291.00px;height:36.00px;background:#f8f8fa"><div class="a" style="left:1477px;top:0;width:126px;height:100%;background:#f2f2f4"></div><div class="cb" style="top:11.5px"></div><div class="c" style="left:46px;top:9.7px">Incydent</div><div class="c" style="left:180.5px;top:9.7px;letter-spacing:0.22px">Incident/211/2025/3/6</div><svg class="a" style="left:450px;top:10.0px" width="13" height="14" viewBox="0 0 13 14" fill="#d23341"><circle cx="6.5" cy="3" r="2.9"/><path d="M0.2 14 C0.5 9 2.5 7 6.5 7 C10.5 7 12.5 9 12.8 14 Z"/><path d="M6.5 7.5 L5.8 9 L6.5 13 L7.2 9 Z" fill="#f8f8fa"/></svg><svg class="a" style="left:491px;top:9.1px" width="18" height="14" viewBox="0 0 18 14"><rect x="0" y="0" width="17.3" height="10.7" rx="0.8" fill="#8f90e2"/><rect x="2" y="1.7" width="13.8" height="7.2" fill="#3a38d4"/><rect x="3" y="12" width="11.7" height="1.7" rx="0.5" fill="#9394e4"/></svg><div class="c" style="left:515.7px;top:9.7px">Portal</div><div class="c" style="left:650.3px;top:9.7px">Admin Admin</div><div class="badge" style="top:6.2px;height:21.7px;line-height:23px;background:#bfcebf;color:#333;letter-spacing:-0.25px">Zamknięte</div><div class="c" style="left:1016px;top:9.7px">Zgłoszenie anonimowe</div><div class="c" style="left:1483px;top:9.7px;letter-spacing:-0.17px">06.03.2025 12:22:18</div></div>
<div class="row" style="top:327.00px;height:36.00px;background:#d0e4ef"><div class="a" style="left:1477px;top:0;width:126px;height:100%;background:#cbdfe9"></div><div class="cb" style="top:11.5px"></div><div class="c" style="left:46px;top:9.7px">Incydent</div><div class="c" style="left:180.5px;top:9.7px;letter-spacing:0.22px">Incident/210/2025/3/6</div><svg class="a" style="left:491px;top:9.1px" width="18" height="14" viewBox="0 0 18 14"><rect x="0" y="0" width="17.3" height="10.7" rx="0.8" fill="#8f90e2"/><rect x="2" y="1.7" width="13.8" height="7.2" fill="#3a38d4"/><rect x="3" y="12" width="11.7" height="1.7" rx="0.5" fill="#9394e4"/></svg><div class="c" style="left:515.7px;top:9.7px">Portal</div><div class="c" style="left:650.3px;top:9.7px">Admin Admin</div><div class="badge" style="top:6.8px;background:#268a7a;line-height:20.5px">Nowe</div><div class="c" style="left:1016px;top:9.7px">Zgłoszenie anonimowe</div><div class="c" style="left:1483px;top:9.7px;letter-spacing:-0.17px">06.03.2025 12:11:54</div></div>
<div class="row" style="top:363.00px;height:36.00px;background:#d0e4ef"><div class="a" style="left:1477px;top:0;width:126px;height:100%;background:#cbdfe9"></div><div class="cb" style="top:11.5px"></div><div class="c" style="left:46px;top:9.7px">Incydent</div><div class="c" style="left:180.5px;top:9.7px;letter-spacing:0.22px">Incident/209/2025/3/6</div><svg class="a" style="left:491px;top:9.1px" width="18" height="14" viewBox="0 0 18 14"><rect x="0" y="0" width="17.3" height="10.7" rx="0.8" fill="#8f90e2"/><rect x="2" y="1.7" width="13.8" height="7.2" fill="#3a38d4"/><rect x="3" y="12" width="11.7" height="1.7" rx="0.5" fill="#9394e4"/></svg><div class="c" style="left:515.7px;top:9.7px">Portal</div><div class="c" style="left:650.3px;top:9.7px">Admin Admin</div><div class="badge" style="top:6.8px;background:#268a7a;line-height:20.5px">Nowe</div><div class="c" style="left:1016px;top:9.7px">Zgłoszenie anonimowe</div><div class="c" style="left:1483px;top:9.7px;letter-spacing:-0.17px">06.03.2025 12:08:16</div></div>
<div class="row" style="top:399.00px;height:36.00px;background:#d0e4ef"><div class="a" style="left:1477px;top:0;width:126px;height:100%;background:#cbdfe9"></div><div class="cb" style="top:11.5px"></div><div class="c" style="left:46px;top:9.7px">Incydent</div><div class="c" style="left:180.5px;top:9.7px;letter-spacing:0.22px">Incident/208/2025/3/6</div><svg class="a" style="left:491px;top:9.1px" width="18" height="14" viewBox="0 0 18 14"><rect x="0" y="0" width="17.3" height="10.7" rx="0.8" fill="#8f90e2"/><rect x="2" y="1.7" width="13.8" height="7.2" fill="#3a38d4"/><rect x="3" y="12" width="11.7" height="1.7" rx="0.5" fill="#9394e4"/></svg><div class="c" style="left:515.7px;top:9.7px">Portal</div><div class="c" style="left:650.3px;top:9.7px">Admin Admin</div><div class="badge" style="top:6.8px;background:#268a7a;line-height:20.5px">Nowe</div><div class="c" style="left:1016px;top:9.7px">Zgłoszenie anonimowe</div><div class="c" style="left:1483px;top:9.7px;letter-spacing:-0.17px">06.03.2025 12:06:40</div></div>
<div class="row" style="top:435.00px;height:36.00px;background:#d0e4ef"><div class="a" style="left:1477px;top:0;width:126px;height:100%;background:#cbdfe9"></div><div class="cb" style="top:11.5px"></div><div class="c" style="left:46px;top:9.7px">Incydent</div><div class="c" style="left:180.5px;top:9.7px;letter-spacing:0.22px">Incident/207/2025/3/6</div><svg class="a" style="left:491px;top:9.1px" width="18" height="14" viewBox="0 0 18 14"><rect x="0" y="0" width="17.3" height="10.7" rx="0.8" fill="#8f90e2"/><rect x="2" y="1.7" width="13.8" height="7.2" fill="#3a38d4"/><rect x="3" y="12" width="11.7" height="1.7" rx="0.5" fill="#9394e4"/></svg><div class="c" style="left:515.7px;top:9.7px">Portal</div><div class="c" style="left:650.3px;top:9.7px">Admin Admin</div><div class="badge" style="top:6.8px;background:#268a7a;line-height:20.5px">Nowe</div><div class="c" style="left:1016px;top:9.7px">Zgłoszenie anonimowe</div><div class="c" style="left:1483px;top:9.7px;letter-spacing:-0.17px">06.03.2025 11:55:26</div></div>
<div class="row" style="top:471.00px;height:36.00px;background:#d0e4ef"><div class="a" style="left:1477px;top:0;width:126px;height:100%;background:#cbdfe9"></div><div class="cb" style="top:11.5px"></div><div class="c" style="left:46px;top:9.7px">Incydent</div><div class="c" style="left:180.5px;top:9.7px;letter-spacing:0.22px">Incident/206/2025/3/6</div><svg class="a" style="left:491px;top:9.1px" width="18" height="14" viewBox="0 0 18 14"><rect x="0" y="0" width="17.3" height="10.7" rx="0.8" fill="#8f90e2"/><rect x="2" y="1.7" width="13.8" height="7.2" fill="#3a38d4"/><rect x="3" y="12" width="11.7" height="1.7" rx="0.5" fill="#9394e4"/></svg><div class="c" style="left:515.7px;top:9.7px">Portal</div><div class="c" style="left:650.3px;top:9.7px">Admin Admin</div><div class="badge" style="top:6.8px;background:#268a7a;line-height:20.5px">Nowe</div><div class="c" style="left:1016px;top:9.7px">Zgłoszenie anonimowe</div><div class="c" style="left:1483px;top:9.7px;letter-spacing:-0.17px">06.03.2025 11:52:52</div></div>
<div class="row" style="top:507.00px;height:36.00px;background:#d0e4ef"><div class="a" style="left:1477px;top:0;width:126px;height:100%;background:#cbdfe9"></div><div class="cb" style="top:11.5px"></div><div class="c" style="left:46px;top:9.7px">Incydent</div><div class="c" style="left:180.5px;top:9.7px;letter-spacing:0.22px">Incident/205/2025/3/6</div><svg class="a" style="left:491px;top:9.1px" width="18" height="14" viewBox="0 0 18 14"><rect x="0" y="0" width="17.3" height="10.7" rx="0.8" fill="#8f90e2"/><rect x="2" y="1.7" width="13.8" height="7.2" fill="#3a38d4"/><rect x="3" y="12" width="11.7" height="1.7" rx="0.5" fill="#9394e4"/></svg><div class="c" style="left:515.7px;top:9.7px">Portal</div><div class="c" style="left:650.3px;top:9.7px">Admin Admin</div><div class="badge" style="top:6.8px;background:#268a7a;line-height:20.5px">Nowe</div><div class="c" style="left:1016px;top:9.7px">Zgłoszenie anonimowe</div><div class="c" style="left:1483px;top:9.7px;letter-spacing:-0.17px">06.03.2025 11:51:59</div></div>
<div class="row" style="top:543.00px;height:36.00px;background:#d0e4ef"><div class="a" style="left:1477px;top:0;width:126px;height:100%;background:#cbdfe9"></div><div class="cb" style="top:11.5px"></div><div class="c" style="left:46px;top:9.7px">Usługa</div><div class="c" style="left:180.5px;top:9.7px;letter-spacing:0.04px">2025/33</div><svg class="a" style="left:491px;top:9.1px" width="18" height="14" viewBox="0 0 18 14"><rect x="0" y="0" width="17.3" height="10.7" rx="0.8" fill="#8f90e2"/><rect x="2" y="1.7" width="13.8" height="7.2" fill="#3a38d4"/><rect x="3" y="12" width="11.7" height="1.7" rx="0.5" fill="#9394e4"/></svg><div class="c" style="left:515.7px;top:9.7px">Portal</div><div class="c" style="left:650.3px;top:9.7px">Admin Admin</div><div class="c" style="left:786px;top:9.7px">-</div><div class="c" style="left:1016px;top:9.7px">Program pocztowy</div><div class="c" style="left:1483px;top:9.7px;letter-spacing:-0.17px">06.03.2025 09:13:20</div></div>
</div>
<div class="a" style="left:1891px;top:278px;width:10px;height:569px;background:#e9ebfb"></div>
<div class="tri" style="left:1892.5px;top:280px;border-top:none;border-bottom:5px solid #c2c4d0;border-left-width:3.5px;border-right-width:3.5px"></div>
<div class="a" style="left:1893px;top:290px;width:6.3px;height:181px;background:#b9bbc9;border-radius:3px"></div>
<div class="tri" style="left:1892.5px;top:829.5px;border-top:5px solid #c2c4d0;border-left-width:3.5px;border-right-width:3.5px"></div>
<div class="a" style="left:288px;top:837px;width:1603px;height:10px;background:#e9ebfb"></div>
<div class="tri" style="left:290px;top:838.5px;border-right:5px solid #c2c4d0;border-left:none;border-top:3.5px solid transparent;border-bottom:3.5px solid transparent"></div>
<div class="a" style="left:300px;top:839.2px;width:1369px;height:5.8px;background:#b9bbc9;border-radius:3px"></div>
<div class="tri" style="left:1883.5px;top:838.5px;border-left:5px solid #c2c4d0;border-right:none;border-top:3.5px solid transparent;border-bottom:3.5px solid transparent"></div>
<div class="a" style="left:288px;top:847px;width:1613px;height:1px;background:#e4e6ea"></div>
<svg class="a" style="left:303px;top:863px" width="10" height="10" viewBox="0 0 10 10" fill="#666"><rect x="0.8" y="0.8" width="1.4" height="8.1"/><path d="M8.2 0.8 V8.9 L2.4 4.85 Z"/></svg>
<svg class="a" style="left:332px;top:863px" width="8" height="10" viewBox="0 0 8 10" fill="#666"><path d="M7.2 0.8 V8.9 L1 4.85 Z"/></svg>
<div class="a" style="left:350px;top:854px;width:28px;height:28px;background:#d2d2f2;color:#4444cc;font-size:12px;line-height:28px;text-align:center">1</div>
<svg class="a" style="left:388px;top:863px" width="8" height="10" viewBox="0 0 8 10" fill="#666"><path d="M0.8 0.8 V8.9 L7 4.85 Z"/></svg>
<svg class="a" style="left:415px;top:863px" width="10" height="10" viewBox="0 0 10 10" fill="#666"><rect x="7.8" y="0.8" width="1.4" height="8.1"/><path d="M1.8 0.8 V8.9 L7.6 4.85 Z"/></svg>
<div class="a" style="left:445.5px;top:860px;font-size:12px;line-height:14px;color:#333">Strona</div>
<div class="a" style="left:486px;top:854px;width:58.5px;height:28px;border:1px solid #e6e9f6;border-radius:5px;background:#f8f9fb"><span class="a" style="left:10px;top:5px;font-size:12px;line-height:14px;color:#333">1</span></div>
<div class="a" style="left:551px;top:860px;font-size:12px;line-height:14px;color:#333">z 1</div>
<div class="a" style="left:578px;top:854px;width:70px;height:28px;border:1px solid #e6e9f6;border-radius:5px;background:#f8f9fb;overflow:hidden"><span class="a" style="left:9.5px;top:5px;font-size:12px;line-height:14px;color:#333">100</span><div class="a" style="left:44px;top:0;width:25px;height:26px;background:#e7ebfd"></div><div class="tri" style="left:53px;top:11px;border-left-width:4px;border-right-width:4px;border-top-width:6px;border-top-color:#3b3bd1"></div></div>
<div class="a" style="left:654px;top:860px;font-size:12px;line-height:14px;color:#333;letter-spacing:-0.1px">na stronę</div>
<div class="a" style="left:1669.5px;top:860px;font-size:12px;line-height:14px;color:#333;letter-spacing:-0.1px">Wyświetlanie elementów 1 - 45 z 45</div>
<svg class="a" style="left:1875px;top:861px" width="14" height="14" viewBox="0 0 14 14" fill="none" stroke="#222" stroke-width="1.7"><path d="M11.6 5.5 A5 5 0 1 1 8.5 2.2"/><path d="M7.5 0 L11.5 2.2 L8 5.2 Z" fill="#222" stroke="none"/></svg>
</body></html>
